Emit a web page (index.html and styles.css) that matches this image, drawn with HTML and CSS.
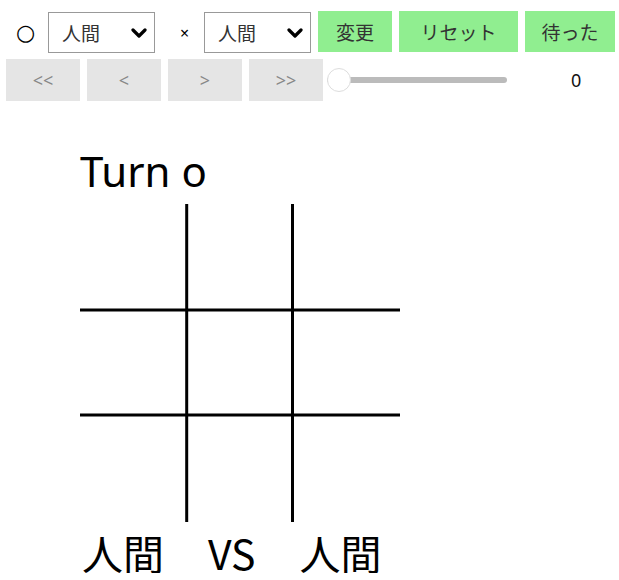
FILE: index.html
```html
<!DOCTYPE html>
<html lang="ja">
<head>
<meta charset="utf-8">
<title>Tic Tac Toe</title>
<link rel="stylesheet" href="styles.css">
</head>
<body>
<div class="controls">
  <div class="row row-top">
    <span class="mark mark-o">○</span>
    <div class="select-wrap">
      <select class="player-select"><option>人間</option><option>CPU</option></select>
      <svg class="chevron" width="16" height="10" viewBox="0 0 16 10"><path d="M2 2 L8 8 L14 2" fill="none" stroke="#000" stroke-width="3.2" stroke-linecap="round" stroke-linejoin="round"/></svg>
    </div>
    <span class="mark mark-x">×</span>
    <div class="select-wrap">
      <select class="player-select"><option>人間</option><option>CPU</option></select>
      <svg class="chevron" width="16" height="10" viewBox="0 0 16 10"><path d="M2 2 L8 8 L14 2" fill="none" stroke="#000" stroke-width="3.2" stroke-linecap="round" stroke-linejoin="round"/></svg>
    </div>
    <button class="btn-green btn-change">変更</button>
    <button class="btn-green btn-reset">リセット</button>
    <button class="btn-green btn-undo">待った</button>
  </div>
  <div class="row row-nav">
    <button class="btn-nav">&lt;&lt;</button>
    <button class="btn-nav">&lt;</button>
    <button class="btn-nav">&gt;</button>
    <button class="btn-nav">&gt;&gt;</button>
    <input class="slider" type="range" min="0" max="9" value="0">
    <span class="slider-value">0</span>
  </div>
</div>
<div class="game">
  <div class="turn">Turn o</div>
  <svg class="board" width="320" height="318" viewBox="0 0 320 318">
    <line x1="106.7" y1="0" x2="106.7" y2="318" stroke="#000" stroke-width="3"/>
    <line x1="212.5" y1="0" x2="212.5" y2="318" stroke="#000" stroke-width="3"/>
    <line x1="0" y1="106" x2="320" y2="106" stroke="#000" stroke-width="3"/>
    <line x1="0" y1="211" x2="320" y2="211" stroke="#000" stroke-width="3"/>
  </svg>
  <div class="versus"><span>人間</span><span>VS</span><span>人間</span></div>
</div>
</body>
</html>
```

FILE: styles.css
```css
* { box-sizing: border-box; }
body {
  margin: 0;
  font-family: "Noto Sans", "Noto Sans CJK JP", sans-serif;
  color: #000;
  background: #fff;
}
.controls {
  padding: 11px 0 0 6px;
}
.row {
  display: flex;
  align-items: flex-start;
}
.row-top {
  height: 42px;
}
.mark {
  display: flex;
  align-items: center;
  height: 42px;
}
.mark-o {
  width: 42px;
  padding-left: 10px;
  font-family: "DejaVu Sans", sans-serif;
  font-size: 22px;
}
.mark-x {
  width: 49px;
  padding-left: 25px;
  font-size: 16px;
  padding-top: 1px;
}
.select-wrap {
  position: relative;
  margin-top: 1px;
}
.player-select {
  appearance: none;
  -webkit-appearance: none;
  width: 107px;
  height: 41px;
  border: 1px solid #999;
  border-radius: 0;
  background: #fff;
  padding: 0 0 0 13px;
  font-family: "Noto Sans CJK JP", sans-serif;
  font-size: 19px;
  color: #333;
  display: block;
}
.chevron {
  position: absolute;
  right: 8px;
  top: 16px;
  pointer-events: none;
}
.btn-green {
  height: 41px;
  border: none;
  background: #90ee90;
  font-family: "Noto Sans CJK JP", sans-serif;
  font-size: 19px;
  color: #333;
  padding: 0;
  margin-left: 7px;
}
.btn-change { width: 74px; }
.btn-reset { width: 119px; }
.btn-undo { width: 90px; }
.row-nav {
  margin-top: 6px;
  align-items: center;
  height: 42px;
}
.btn-nav {
  width: 74px;
  height: 42px;
  border: none;
  background: #e5e5e5;
  color: #888;
  font-family: "Noto Sans", sans-serif;
  font-size: 18px;
  padding: 0;
  margin-right: 7px;
}
.btn-nav:last-of-type { margin-right: 4px; }
.slider {
  -webkit-appearance: none;
  appearance: none;
  width: 180px;
  height: 24px;
  margin: 0;
  background: transparent;
}
.slider::-webkit-slider-runnable-track {
  height: 6px;
  background: #bbb;
  border-radius: 3px;
}
.slider::-webkit-slider-thumb {
  -webkit-appearance: none;
  width: 24px;
  height: 24px;
  border-radius: 50%;
  background: #fff;
  border: 1.5px solid #ddd;
  margin-top: -9px;
}
.slider-value {
  margin-left: 64px;
  font-size: 18px;
  color: #111;
}
.game {
  padding-left: 80px;
  margin-top: 46px;
}
.turn {
  font-size: 42px;
  line-height: 48px;
  height: 48px;
}
.board {
  display: block;
  margin-top: 9px;
}
.versus {
  display: flex;
  gap: 44px;
  font-family: "Noto Sans CJK JP", sans-serif;
  font-size: 41px;
  line-height: 41px;
  margin-top: 10px;
  padding-left: 2px;
}
```
